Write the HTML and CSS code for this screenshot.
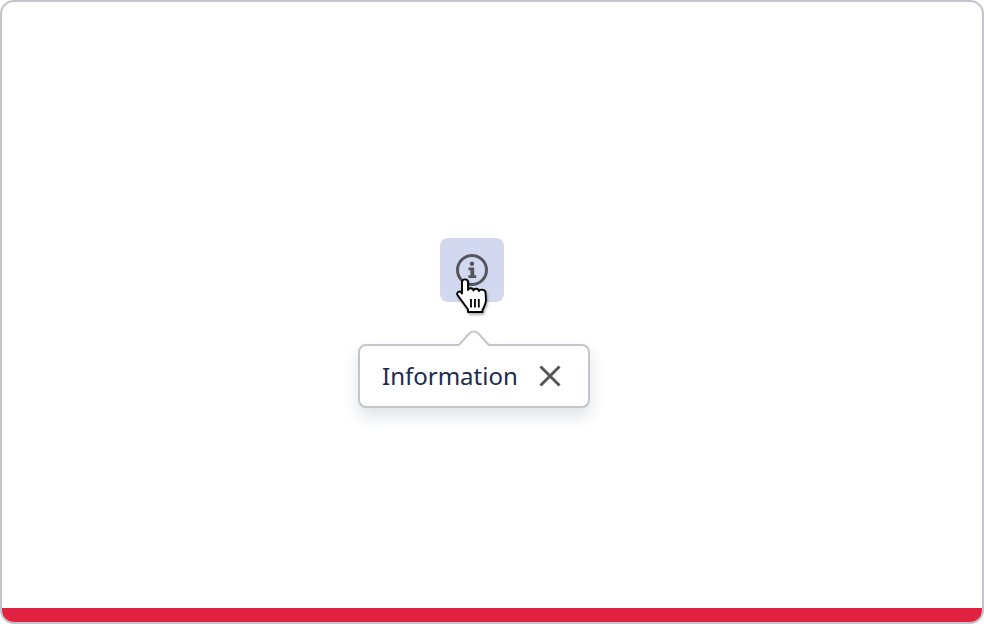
FILE: index.html
```html
<!DOCTYPE html>
<html lang="en">
<head>
    <meta charset="UTF-8">
    <meta name="viewport" content="width=device-width, initial-scale=1.0">
    <title>Tooltip</title>
    <link rel="stylesheet" href="styles.css">
</head>
<body>
    <div class="frame">
        <div class="stage">
            <div class="info-wrap">
                <button class="info-button" type="button" aria-label="Information">
                    <svg class="info-icon" xmlns="http://www.w3.org/2000/svg" viewBox="0 0 32 32" fill="none">
                        <circle cx="16" cy="16" r="14.5" stroke="currentColor" stroke-width="3"></circle>
                        <circle cx="16" cy="9.7" r="2.200" fill="currentColor"></circle>
                        <path d="M12.400 13.400h5.800v7.800h2v2.800h-7.800v-2.800h2v-5h-2z" fill="currentColor"></path>
                    </svg>
                </button>
                <svg class="hand-cursor" xmlns="http://www.w3.org/2000/svg" viewBox="0 0 32 36">
                    <path d="M6 15V4c0-3.500 6-3.500 6 0v8c.5-2.500 5-2.500 5.500.5.500-2.500 5-2.500 5.500.5.500-2 6.500-2 6.500 1.500l.5 7c0 3.500-1 6-3.500 10.500V34H12v-2.500L1.500 17c-1.500-3 2.500-5 4.500-1.500z" fill="#fff" stroke="#000" stroke-width="1.900" stroke-linejoin="round"></path>
                    <path d="M15 21v8.500M19 21v8.500M22.800 21v8.500" stroke="#000" stroke-width="1.800"></path>
                </svg>
                <div class="tooltip">
                    <svg class="tooltip-arrow" xmlns="http://www.w3.org/2000/svg" viewBox="0 0 36 16">
                        <path d="M3 13.500h29v2.500H3z" fill="#fff"></path>
                        <path d="M0 15h1c1.200 0 2.200-.5 3-1.300L12.800 4c2.800-3.200 7.200-3.200 10 0l8.800 9.700c.8.800 1.800 1.300 3 1.300H36" fill="#fff" stroke="#c4c4cc" stroke-width="2"></path>
                    </svg>
                    <span class="tooltip-text">Information</span>
                    <button class="tooltip-close" type="button" aria-label="Close">
                        <svg xmlns="http://www.w3.org/2000/svg" viewBox="0 0 24 24" fill="none" stroke="currentColor" stroke-width="3">
                            <path d="M2.500 2.500l19 19M21.500 2.500l-19 19"></path>
                        </svg>
                    </button>
                </div>
            </div>
        </div>
        <div class="status-bar"></div>
    </div>
</body>
</html>
```

FILE: styles.css
```css
:root {
    --border-color: #c4c4cc;
    --accent-red: #e0213f;
    --button-color: #d2d8ef;
    --icon-color: #55555c;
    --text-color: #1c2b4e;
}

* {
    margin: 0;
    padding: 0;
    box-sizing: border-box;
}

body {
    font-family: "Noto Sans", sans-serif;
    background-color: white;
    color: var(--text-color);
}

.frame {
    width: 984px;
    height: 624px;
    border: 2px solid var(--border-color);
    border-radius: 14px;
    display: flex;
    flex-direction: column;
    overflow: hidden;
}

.stage {
    flex-grow: 1;
    padding: 236px 0 0 438px;
}

.info-wrap {
    position: relative;
    width: 64px;
    height: 64px;
}

.info-button {
    width: 64px;
    height: 64px;
    background-color: var(--button-color);
    border: none;
    border-radius: 8px;
    color: var(--icon-color);
    display: flex;
    align-items: center;
    justify-content: center;
}

.info-icon {
    width: 32px;
    height: 32px;
}

.hand-cursor {
    position: absolute;
    left: 16px;
    top: 40px;
    width: 32px;
    height: 36px;
    filter: drop-shadow(1px 2px 1px rgba(0, 0, 0, 0.3));
    z-index: 1;
}

.tooltip {
    position: absolute;
    left: -82px;
    top: 106px;
    width: 232px;
    height: 64px;
    background-color: white;
    border: 2px solid var(--border-color);
    border-radius: 8px;
    box-shadow: 0 8px 16px rgba(30, 40, 70, 0.14);
    padding: 0 26px 0 22px;
    display: flex;
    align-items: center;
    justify-content: space-between;
}

.tooltip-arrow {
    position: absolute;
    left: 96px;
    top: -16px;
    width: 36px;
    height: 16px;
}

.tooltip-text {
    font-size: 24px;
    line-height: 32px;
}

.tooltip-close {
    width: 24px;
    height: 24px;
    background: none;
    border: none;
    color: var(--icon-color);
    display: flex;
}

.status-bar {
    height: 14px;
    background-color: var(--accent-red);
}
```
